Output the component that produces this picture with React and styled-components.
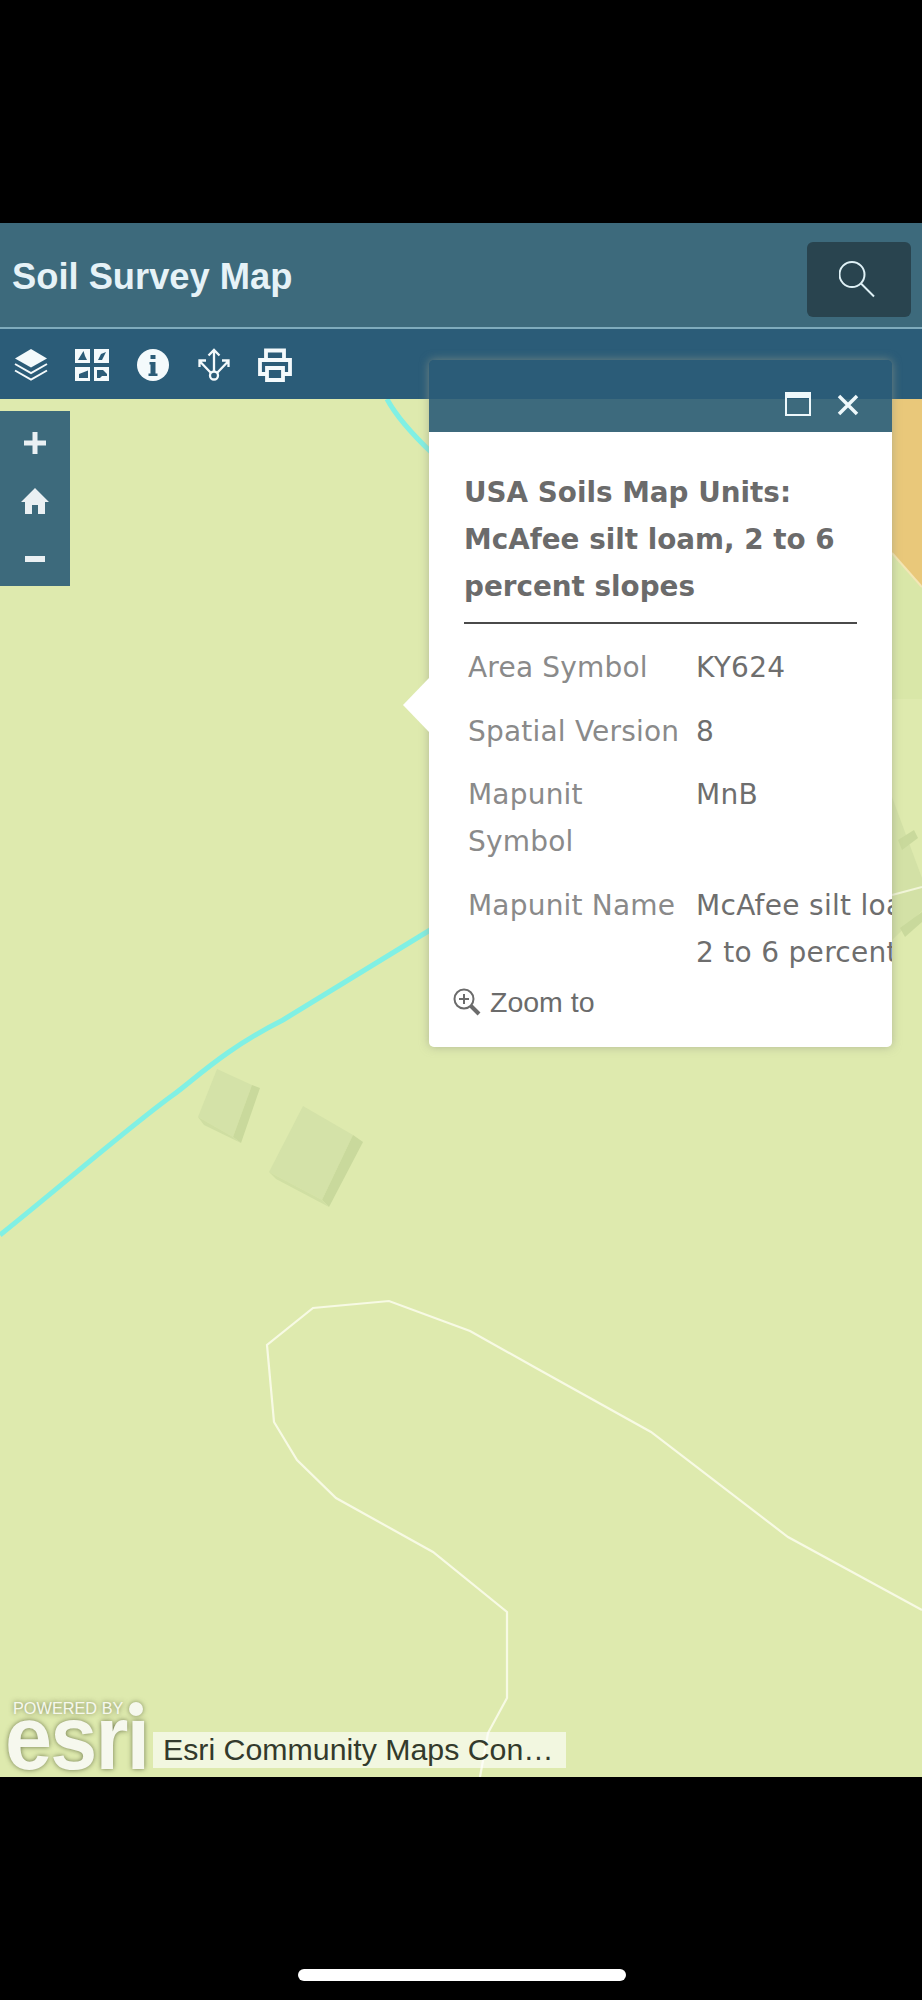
import React from 'react';
import styled, { createGlobalStyle } from 'styled-components';

const Global = createGlobalStyle`
  html, body { margin: 0; padding: 0; background: #000; }
`;

const Screen = styled.div`
  width: 922px;
  height: 2000px;
  background: #000;
  display: flex;
  flex-direction: column;
  overflow: hidden;
  position: relative;
`;
const TopInset = styled.div`height: 223px; flex: none;`;
const Header = styled.header`
  height: 106px;
  flex: none;
  box-sizing: border-box;
  background: #3d6a7c;
  border-bottom: 2px solid #7fabbc;
  display: flex;
  align-items: center;
  justify-content: space-between;
  padding: 0 11px 0 12px;
`;
const Title = styled.h1`
  margin: 0;
  padding-top: 3px;
  font: bold 36.3px "Liberation Sans", Arial, sans-serif;
  color: #e6f2f7;
`;
const SearchButton = styled.div`
  width: 104px;
  height: 75px;
  margin-top: 9px;
  border-radius: 6px;
  background: #29444f;
  display: flex;
  align-items: center;
  justify-content: center;
  color: #dff1f6;
`;
const Toolbar = styled.nav`
  height: 70px;
  flex: none;
  background: #2b5c78;
  display: flex;
  align-items: center;
  gap: 27px;
  padding: 2px 0 0 14px;
  box-sizing: border-box;
`;
const ToolIcon = styled.svg`
  width: 34px;
  height: 34px;
  flex: none;
  color: #f4fafc;
`;
const Map = styled.main`
  height: 1378px;
  flex: none;
  background: #deeaae;
  position: relative;
  overflow: hidden;
`;
const MapArt = styled.svg`
  position: absolute;
  inset: 0;
  width: 922px;
  height: 1378px;
`;
const ZoomControls = styled.div`
  position: absolute;
  left: 0;
  top: 12px;
  width: 70px;
  height: 175px;
  background: #3d6a7c;
  display: flex;
  flex-direction: column;
  align-items: center;
  justify-content: space-between;
  padding: 17px 0 12px;
  box-sizing: border-box;
`;
const ControlIcon = styled.svg`
  width: 30px;
  height: 30px;
  color: #eaf0f3;
`;
const Attribution = styled.div`
  position: absolute;
  left: 4px;
  bottom: 5px;
  display: flex;
  align-items: flex-end;
`;
const EsriLogo = styled.div`
  width: 149px;
  height: 72px;
  flex: none;
  position: relative;
  color: #f6f8ee;
  font-family: "Liberation Sans", Arial, sans-serif;
  text-shadow: 0 0 5px rgba(90,100,60,.85);
`;
const Powered = styled.span`
  position: absolute;
  left: 9px;
  top: 1px;
  font-size: 16.3px;
  line-height: 14px;
  white-space: nowrap;
`;
const PoweredDot = styled.span`
  position: absolute;
  left: 125px;
  top: 2px;
  width: 14px;
  height: 14px;
  border-radius: 50%;
  background: #f6f8ee;
  box-shadow: 0 0 5px rgba(90,100,60,.7);
`;
const EsriWord = styled.span`
  position: absolute;
  left: 1px;
  top: 15px;
  font-size: 91px;
  font-weight: bold;
  line-height: 46px;
  letter-spacing: -2px;
  transform: scaleX(.93);
  transform-origin: left center;
`;
const CopyRight = styled.div`
  margin-bottom: 4px;
  width: 413px;
  height: 36px;
  flex: none;
  box-sizing: border-box;
  background: rgba(255,255,255,.62);
  padding-left: 10px;
  font: 30.3px/36px "Liberation Sans", Arial, sans-serif;
  color: #333a2c;
  white-space: nowrap;
`;
const HomeBar = styled.div`
  position: absolute;
  left: 298px;
  top: 1969px;
  width: 328px;
  height: 12px;
  border-radius: 6px;
  background: #fff;
`;
const Popup = styled.section`
  position: absolute;
  left: 429px;
  top: 360px;
  width: 463px;
  height: 687px;
  border-radius: 5px;
  box-shadow: 0 0 10px rgba(150,155,135,.65);
  display: flex;
  flex-direction: column;
`;
const PopupArrow = styled.div`
  position: absolute;
  left: -26px;
  top: 318px;
  width: 0;
  height: 0;
  border-top: 27px solid transparent;
  border-bottom: 27px solid transparent;
  border-right: 26px solid #fff;
`;
const PopupBar = styled.div`
  height: 72px;
  flex: none;
  border-radius: 5px 5px 0 0;
  background: rgba(43,92,120,.9);
  display: flex;
  align-items: flex-end;
  justify-content: flex-end;
  gap: 26px;
  padding: 0 33px 16px 0;
  box-sizing: border-box;
  color: #eef8fb;
`;
const PopupBody = styled.div`
  flex: 1;
  min-height: 0;
  background: #fff;
  border-radius: 0 0 5px 5px;
  overflow: hidden;
  padding: 37px 0 0 35px;
  font-family: "DejaVu Sans", Verdana, sans-serif;
  box-sizing: border-box;
`;
const PopupTitle = styled.h2`
  margin: 0;
  width: 393px;
  padding-bottom: 12px;
  border-bottom: 2px solid #4a4a4a;
  font-size: 27.8px;
  font-weight: bold;
  line-height: 47px;
  color: #6b6b6b;
`;
const Fields = styled.div`
  display: grid;
  grid-template-columns: 228px 300px;
  row-gap: 16.5px;
  padding: 20px 0 0 4px;
  font-size: 28px;
  line-height: 47px;
`;
const FieldLabel = styled.div`
  color: #8a8a8a;
  white-space: pre;
  letter-spacing: .2px;
`;
const FieldValue = styled.div`
  color: #6e6e6e;
  white-space: pre;
  letter-spacing: .3px;
`;
const ZoomLink = styled.div`
  margin: 10px 0 0 -11px;
  display: flex;
  align-items: center;
  gap: 9px;
  font: 28.500px/33px "Liberation Sans", Arial, sans-serif;
  color: #6b6b6b;
`;

const road = "M922 1211L788 1138L651 1033L536 969L470 932L389 902L313 909L267 946L274 1023L297 1061L336 1099L433 1153L507 1213V1299L488 1334L480 1378";

export default function App() {
  return (
    <Screen>
      <Global />
      <TopInset />
      <Header>
        <Title>Soil Survey Map</Title>
        <SearchButton>
          <svg width="40" height="40" viewBox="0 0 40 40" fill="none" stroke="currentColor" strokeWidth="2">
            <circle cx="13" cy="14.500" r="12.500" />
            <path d="M22 23.500L35 36.500" />
          </svg>
        </SearchButton>
      </Header>
      <Toolbar>
        <ToolIcon viewBox="0 0 34 34" fill="currentColor">
          <path d="M17 1L33 10.500L17 19.500L1 10.500Z" />
          <path d="M1 16L17 25L33 16M1 22.500L17 31.500L33 22.500" fill="none" stroke="currentColor" strokeWidth="2" />
        </ToolIcon>
        <ToolIcon viewBox="0 0 34 34" fill="currentColor">
          <path fillRule="evenodd" d="M0 1H15V15H0ZM3 12H12L10 8L8.500 3L6 7Z" />
          <path fillRule="evenodd" d="M19 1H34V15H19ZM23 12H27L31 4L26 6Z" />
          <path fillRule="evenodd" d="M0 19H15V33H0ZM4 30V26L13 22.500V30Z" />
          <path fillRule="evenodd" d="M19 19H34V33H19ZM22 22H28L32 26V28H27L25 30H22Z" />
        </ToolIcon>
        <ToolIcon viewBox="0 0 34 34">
          <circle cx="17" cy="17" r="16" fill="currentColor" />
          <path d="M14.500 7h5v4h-5zM13.500 14h6v11.500h2V28h-9v-2.500h2V16.500h-1z" fill="#2b5c78" />
        </ToolIcon>
        <ToolIcon viewBox="0 0 34 34" fill="none" stroke="currentColor" strokeWidth="2.300">
          <circle cx="17" cy="27.500" r="4" />
          <path d="M17 23.500V2M11.500 7.500L17 2L22.500 7.500" />
          <path d="M14 25L2.500 13M2.500 19V12.500H9" />
          <path d="M20 25L31.500 13M31.500 19V12.500H25" />
        </ToolIcon>
        <ToolIcon viewBox="0 0 34 34" fill="none" stroke="currentColor" strokeWidth="3.800">
          <path d="M8 12V2.500H26V12" />
          <path d="M8 26H2V12H32V26H26" />
          <path d="M9 20H25V32H9Z" />
        </ToolIcon>
      </Toolbar>
      <Map>
        <MapArt viewBox="0 0 922 1378">
          <path d="M892 0H922V188L892 154Z" fill="#e9c87a" />
          <path d="M892 154L922 188V300H892Z" fill="#d9e7a8" />
          <path d="M892 154L922 188" fill="none" stroke="#f3e6b4" strokeWidth="2" />
          <path d="M387 0C395 15 410 33 432 54" fill="none" stroke="#80f0e4" strokeWidth="5" />
          <path d="M0 836C60 788 130 727 173 696C195 680 225 650 283 621L435 528" fill="none" stroke="#80f0e4" strokeWidth="5" />
          <path d="M217 670L252 686L233 738L198 718Z" fill="#d4e2a8" />
          <path d="M252 686L260 689L241 744L233 738Z" fill="#c9d99c" />
          <path d="M198 718L233 738L241 744L204 726Z" fill="#cfdea2" />
          <path d="M303 707L353 736L322 801L269 773Z" fill="#d4e2a8" />
          <path d="M353 736L363 743L329 808L322 801Z" fill="#c9d99c" />
          <path d="M269 773L322 801L329 808L276 780Z" fill="#d0dfa3" />
          <path d="M892 398L922 479V512L892 541Z" fill="#d3e1a6" />
          <path d="M898 441L914 431L918 439L902 451Z" fill="#c9d99c" />
          <path d="M900 529L922 513V523L905 538Z" fill="#c9d99c" />
          <path d="M892 496L922 488" fill="none" stroke="#f1f5d8" strokeWidth="2" />
          <path d={road} fill="none" stroke="#f7fae4" strokeWidth="2.200" />
        </MapArt>
        <ZoomControls>
          <ControlIcon viewBox="0 0 30 30" fill="currentColor"><path d="M12.500 4h5v8.500H26v5h-8.500V26h-5v-8.500H4v-5h8.500z" /></ControlIcon>
          <ControlIcon viewBox="0 0 30 30" fill="currentColor"><path d="M15 2L29 16H25V28H18V19H12V28H5V16H1Z" /></ControlIcon>
          <ControlIcon viewBox="0 0 30 30" fill="currentColor"><path d="M5 12h20v6H5z" /></ControlIcon>
        </ZoomControls>
        <Attribution>
          <EsriLogo>
            <Powered>POWERED BY</Powered>
            <PoweredDot />
            <EsriWord>esrı</EsriWord>
          </EsriLogo>
          <CopyRight>Esri Community Maps Con…</CopyRight>
        </Attribution>
      </Map>
      <Popup>
        <PopupArrow />
        <PopupBar>
          <svg width="26" height="24" viewBox="0 0 26 24" fill="none" stroke="currentColor">
            <path d="M1 1H25V23H1Z" strokeWidth="2" />
            <path d="M1 3.500H25" strokeWidth="5" />
          </svg>
          <svg width="22" height="22" viewBox="0 0 22 22" fill="none" stroke="currentColor" strokeWidth="3.500">
            <path d="M2 2L20 20M20 2L2 20" />
          </svg>
        </PopupBar>
        <PopupBody>
          <PopupTitle>USA Soils Map Units: McAfee silt loam, 2 to 6 percent slopes</PopupTitle>
          <Fields>
            <FieldLabel>Area Symbol</FieldLabel><FieldValue>KY624</FieldValue>
            <FieldLabel>Spatial Version</FieldLabel><FieldValue>8</FieldValue>
            <FieldLabel>{'Mapunit\nSymbol'}</FieldLabel><FieldValue>MnB</FieldValue>
            <FieldLabel>Mapunit Name</FieldLabel><FieldValue>{'McAfee silt loam,\n2 to 6 percent slopes'}</FieldValue>
          </Fields>
          <ZoomLink>
            <svg width="28" height="28" viewBox="0 0 28 28" fill="none" stroke="currentColor" strokeWidth="2">
              <circle cx="11" cy="11" r="9.500" />
              <path d="M11 6V16M6 11H16" />
              <path d="M18 18L26 26" strokeWidth="4" />
            </svg>
            Zoom to
          </ZoomLink>
        </PopupBody>
      </Popup>
      <HomeBar />
    </Screen>
  );
}
